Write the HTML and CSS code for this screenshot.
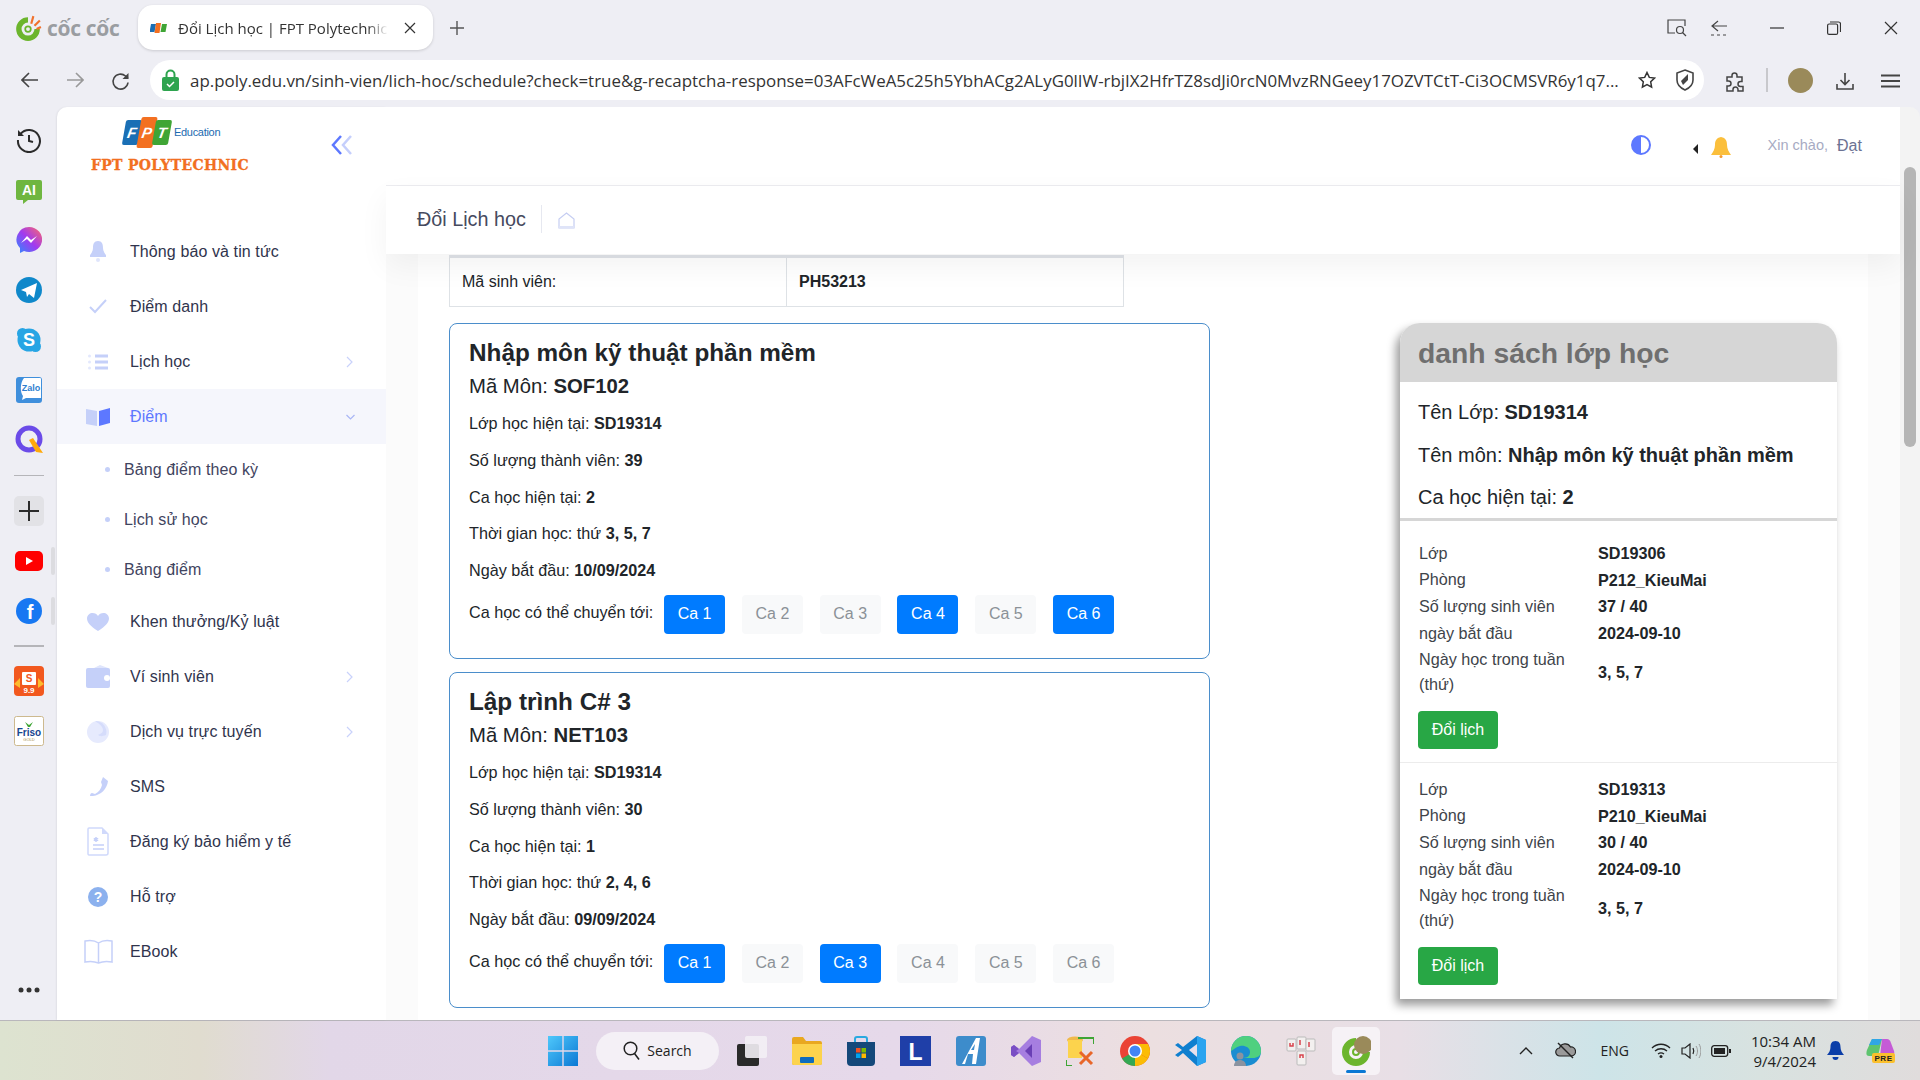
FILE: index.html
```html
<!DOCTYPE html>
<html lang="vi">
<head>
  <meta charset="UTF-8">
  <title>Đổi Lịch học | FPT Polytechnic</title>
  <link rel="stylesheet" href="styles.css">
</head>
<body>
  <!-- browser tab strip -->
  <div class="tabstrip">
    <div class="brand">
      <svg width="28" height="28" viewBox="0 0 26 26"><path d="M13 3a11 11 0 1 0 11 11h-5a6 6 0 1 1-6-6z" fill="#6cb52d"/><circle cx="13" cy="14" r="2.6" fill="none" stroke="#6cb52d" stroke-width="1.6"/><path d="M16 9l2-7M19 11l5-5M21 14l4-2" stroke="#f0712c" stroke-width="2"/></svg>
      <span class="brand-name">cốc cốc</span>
    </div>
    <div class="tab">
      <svg class="favicon" width="17" height="10" viewBox="0 0 17 10"><path d="M1 1h5l-1.5 8h-5z" fill="#1a6fb5"/><path d="M6 0h5l-1.500 10h-5z" fill="#f37021"/><path d="M12 1h5l-1.5 8h-5z" fill="#3fa535"/></svg>
      <span class="tab-title">Đổi Lịch học | FPT Polytechnic</span>
      <svg width="12" height="12" viewBox="0 0 12 12"><path d="M1 1l10 10M11 1L1 11" stroke="#333" stroke-width="1.2"/></svg>
    </div>
    <svg class="newtab" width="16" height="16" viewBox="0 0 16 16"><path d="M8 1v14M1 8h14" stroke="#555" stroke-width="1.4"/></svg>
    <div class="win-controls">
      <svg width="20" height="18" viewBox="0 0 20 18"><path d="M8 14H1V1h17v6" fill="none" stroke="#444" stroke-width="1.2"/><circle cx="13" cy="11" r="3.5" fill="none" stroke="#444" stroke-width="1.2"/><path d="M15.5 13.5l3.5 3.5" stroke="#444" stroke-width="1.2"/></svg>
      <svg class="wc-back" width="18" height="18" viewBox="0 0 18 18"><path d="M8 2L2 7l6 5M2 7h15M1 16h3M7 16h3M13 16h3" fill="none" stroke="#444" stroke-width="1.2"/></svg>
      <svg class="wc-min" width="14" height="2" viewBox="0 0 14 2"><path d="M0 1h14" stroke="#333" stroke-width="1.2"/></svg>
      <svg class="wc-max" width="14" height="14" viewBox="0 0 14 14"><rect x=".6" y="3" width="10" height="10.4" rx="1.5" fill="none" stroke="#333" stroke-width="1.2"/><path d="M3 1h8.5a2 2 0 0 1 2 2v8" fill="none" stroke="#333" stroke-width="1.2"/></svg>
      <svg class="wc-close" width="14" height="14" viewBox="0 0 14 14"><path d="M1 1l12 12M13 1L1 13" stroke="#333" stroke-width="1.2"/></svg>
    </div>
  </div>

  <!-- address bar -->
  <div class="toolbar">
    <svg class="nav-first" width="18" height="16" viewBox="0 0 18 16"><path d="M8 1L1 8l7 7M1 8h16" fill="none" stroke="#444" stroke-width="1.6"/></svg>
    <svg class="nav" width="18" height="16" viewBox="0 0 18 16"><path d="M10 1l7 7-7 7M17 8H1" fill="none" stroke="#999" stroke-width="1.6"/></svg>
    <svg class="nav" width="20" height="20" viewBox="0 0 20 20"><path d="M17 10.5A7.5 7.5 0 1 1 14.5 4L17 6.5" fill="none" stroke="#444" stroke-width="1.6"/><path d="M17.500 1v6h-6z" fill="#444"/></svg>
    <div class="omnibox">
      <svg width="17" height="22" viewBox="0 0 17 22"><path d="M4.500 9V5.500a4 4 0 0 1 8 0V9" fill="none" stroke="#2ea44f" stroke-width="2"/><rect y="8" width="17" height="14" rx="2" fill="#2ea44f"/><path d="M5 15l2.500 2.500L12 13" fill="none" stroke="#fff" stroke-width="1.5"/></svg>
      <span class="url">ap.poly.edu.vn/sinh-vien/lich-hoc/schedule?check=true&amp;g-recaptcha-response=03AFcWeA5c25h5YbhACg2ALyG0lIW-rbjIX2HfrTZ8sdJi0rcN0MvzRNGeey17OZVTCtT-Ci3OCMSVR6y1q7...</span>
      <svg class="star" width="18" height="18" viewBox="0 0 18 18"><path d="M9 1.500l2.300 4.900 5.200.7-3.800 3.700.9 5.300L9 13.500l-4.600 2.600.9-5.300L1.500 7.100l5.200-.7z" fill="none" stroke="#333" stroke-width="1.5"/></svg>
      <svg class="shield" width="18" height="22" viewBox="0 0 18 22"><path d="M9 1l8 3v7c0 5-3.500 8-8 10-4.500-2-8-5-8-10V4z" fill="none" stroke="#444" stroke-width="1.6"/><path d="M5 12l7-7v6l-5 5z" fill="#444"/></svg>
    </div>
    <svg class="ext" width="20" height="20" viewBox="0 0 20 20"><path d="M7 3.500a2.500 2.500 0 0 1 5 0V5h5v4.500h-1.500a2.500 2.500 0 0 0 0 5H18V19h-5v-1.500a2.500 2.500 0 0 0-5 0V19H2v-5h1.500a2.500 2.500 0 0 0 0-5H2V5h5z" fill="none" stroke="#444" stroke-width="1.5"/></svg>
    <span class="tool-sep"></span>
    <span class="avatar"></span>
    <svg class="dl" width="18" height="18" viewBox="0 0 18 18"><path d="M9 1v11M4.500 8L9 12.500 13.500 8M1 12v5h16v-5" fill="none" stroke="#444" stroke-width="1.6"/></svg>
    <svg class="menu" width="19" height="14" viewBox="0 0 19 14"><path d="M0 1.500h19M0 7h19M0 12.500h19" stroke="#444" stroke-width="1.8"/></svg>
  </div>

  <div class="window">
    <!-- browser side dock -->
    <aside class="dock">
      <div class="dock-item"><svg width="26" height="26" viewBox="0 0 26 26"><path d="M4.500 7A11 11 0 1 1 2 13" fill="none" stroke="#2b2b2b" stroke-width="2"/><path d="M2 3v6h6z" fill="#2b2b2b"/><path d="M13 8v6l4 1" fill="none" stroke="#2b2b2b" stroke-width="2"/></svg></div>
      <div class="dock-item dock-ai"><svg width="28" height="26" viewBox="0 0 28 26"><path d="M3 1h22a2 2 0 0 1 2 2v16a2 2 0 0 1-2 2H13l-5 4v-4H3a2 2 0 0 1-2-2V3a2 2 0 0 1 2-2z" fill="#6fb640"/><text x="14" y="16" class="svg-ai">AI</text></svg></div>
      <div class="dock-item"><svg width="26" height="26" viewBox="0 0 26 26"><defs><linearGradient id="ms" x1="0" y1="1" x2="1" y2="0"><stop offset="0" stop-color="#2b8cff"/><stop offset=".5" stop-color="#a13af0"/><stop offset="1" stop-color="#ff6a68"/></linearGradient></defs><path d="M13 0a13 12.500 0 1 1-5 24l-4 2v-5A13 12.500 0 0 1 13 0z" fill="url(#ms)"/><path d="M5 16l6-7 4 4 6-4-6 7-4-4z" fill="#fff"/></svg></div>
      <div class="dock-item"><svg width="26" height="26" viewBox="0 0 26 26"><circle cx="13" cy="13" r="13" fill="#0f88ca"/><path d="M5 13L21 6l-3 15-5-4-2 3-1-5z" fill="#fff"/></svg></div>
      <div class="dock-item"><svg width="26" height="26" viewBox="0 0 26 26"><circle cx="13" cy="13" r="11.500" fill="#27a5e4"/><circle cx="6.500" cy="6.500" r="5.500" fill="#27a5e4"/><circle cx="19.500" cy="19.500" r="5.500" fill="#27a5e4"/><text x="13" y="19" class="svg-s">S</text></svg></div>
      <div class="dock-item"><svg width="26" height="26" viewBox="0 0 26 26"><rect width="26" height="26" rx="3" fill="#3f8fdc"/><path d="M8 1h16a1 1 0 0 1 1 1v19H10l-4 2 1-4C4 15 4 6 8 1z" fill="#fff"/><text x="15" y="14" class="svg-zalo">Zalo</text></svg></div>
      <div class="dock-item"><svg width="30" height="30" viewBox="0 0 30 30"><circle cx="15" cy="14" r="11" fill="none" stroke="#6b4be8" stroke-width="5"/><path d="M15 15l4-2 10 15-7-1z" fill="#ffa90a"/></svg></div>
      <div class="dock-line"></div>
      <div class="dock-add"><svg width="20" height="20" viewBox="0 0 20 20"><path d="M10 0v20M0 10h20" stroke="#2b2b2b" stroke-width="2"/></svg></div>
      <div class="dock-item dock-open"><svg width="28" height="20" viewBox="0 0 28 20"><rect width="28" height="20" rx="5" fill="#f00"/><path d="M11 6l7 4-7 4z" fill="#fff"/></svg></div>
      <div class="dock-item dock-open"><svg width="26" height="26" viewBox="0 0 26 26"><circle cx="13" cy="13" r="13" fill="#1778f2"/><text x="14" y="21" class="svg-f">f</text></svg></div>
      <div class="dock-line dock-line-b"></div>
      <div class="dock-item"><svg width="30" height="30" viewBox="0 0 30 30"><rect width="30" height="30" rx="4" fill="#f2581e"/><path d="M0 18l6-6v10zM30 18l-6-6v10z" fill="#fdbb2d"/><rect x="8" y="6" width="14" height="13" rx="1" fill="#fff"/><text x="15" y="16" class="svg-sp">S</text><text x="15" y="27" class="svg-99">9.9</text></svg></div>
      <div class="dock-item"><svg width="30" height="30" viewBox="0 0 30 30"><rect x=".5" y=".5" width="29" height="29" rx="2" fill="#fff" stroke="#cdb98e"/><path d="M11 6l4 3 4-3-3 5h-2z" fill="#3fa535"/><text x="15" y="20" class="svg-friso">Friso</text><text x="15" y="25" class="svg-gold">GOLD</text></svg></div>
      <svg class="dock-more" width="22" height="6" viewBox="0 0 22 6"><circle cx="3" cy="3" r="2.500" fill="#333"/><circle cx="11" cy="3" r="2.500" fill="#333"/><circle cx="19" cy="3" r="2.500" fill="#333"/></svg>
    </aside>

    <!-- site sidebar -->
    <nav class="sidebar">
      <div class="logo">
        <div class="logo-main">
          <div class="logo-mark">
            <span class="fpt fpt-f">F</span><span class="fpt fpt-p">P</span><span class="fpt fpt-t">T</span>
            <span class="logo-edu">Education</span>
          </div>
          <div class="logo-name">FPT POLYTECHNIC</div>
        </div>
        <svg class="collapse" width="22" height="20" viewBox="0 0 22 20"><path d="M10 1L2 10l8 9" fill="none" stroke="#5d78ff" stroke-width="2.5"/><path d="M20 1l-8 9 8 9" fill="none" stroke="#c5cffc" stroke-width="2.5"/></svg>
      </div>
      <ul class="menu-list">
        <li class="menu-item"><span class="menu-icon"><svg width="16" height="21" viewBox="0 0 16 21"><path d="M8 0c4 0 5 3 5 7 0 3 2 6 3 7v2H0v-2c1-1 3-4 3-7 0-4 1-7 5-7z" fill="#c5d0f9"/><circle cx="8" cy="19" r="2" fill="#dfe5fc"/></svg></span>Thông báo và tin tức</li>
        <li class="menu-item"><span class="menu-icon"><svg width="18" height="15" viewBox="0 0 18 15"><path d="M1 8l5 5L17 1" fill="none" stroke="#c5d0f9" stroke-width="2"/></svg></span>Điểm danh</li>
        <li class="menu-item"><span class="menu-icon"><svg width="20" height="16" viewBox="0 0 20 16"><circle cx="1.500" cy="2" r="1.500" fill="#e3e8fd"/><circle cx="1.500" cy="8" r="1.500" fill="#e3e8fd"/><circle cx="1.500" cy="14" r="1.500" fill="#e3e8fd"/><path d="M7 2h13M7 8h13M7 14h13" stroke="#c5d0f9" stroke-width="3"/></svg></span>Lịch học<svg class="chev" width="7" height="12" viewBox="0 0 7 12"><path d="M1 1l5 5-5 5" fill="none" stroke="#c9d2fb" stroke-width="1.2"/></svg></li>
        <li class="menu-item is-open"><span class="menu-icon"><svg width="25" height="18" viewBox="0 0 25 18"><path d="M0 1l11 2v15L0 16z" fill="#c5d0f9"/><path d="M13 3l11-3v15l-11 3z" fill="#5d78ff"/></svg></span>Điểm<svg class="chev chev-down" width="9" height="6" viewBox="0 0 9 6"><path d="M.5 1l4 4 4-4" fill="none" stroke="#a9b6f5" stroke-width="1.2"/></svg></li>
        <li class="sub-item">Bảng điểm theo kỳ</li>
        <li class="sub-item">Lịch sử học</li>
        <li class="sub-item">Bảng điểm</li>
        <li class="menu-item"><span class="menu-icon"><svg width="22" height="18" viewBox="0 0 22 18"><path d="M11 18C3 13 0 9 0 5.500 0 2 3 0 5.500 0 8 0 10 1 11 3c1-2 3-3 5.500-3C19 0 22 2 22 5.500 22 9 19 13 11 18z" fill="#c5d0f9"/></svg></span>Khen thưởng/Kỷ luật</li>
        <li class="menu-item"><span class="menu-icon"><svg width="24" height="23" viewBox="0 0 24 23"><path d="M14 0l8 3H8z" fill="#dfe5fc"/><rect y="3" width="24" height="20" rx="2" fill="#c5d0f9"/><circle cx="21" cy="13" r="3" fill="#fff"/></svg></span>Ví sinh viên<svg class="chev" width="7" height="12" viewBox="0 0 7 12"><path d="M1 1l5 5-5 5" fill="none" stroke="#c9d2fb" stroke-width="1.2"/></svg></li>
        <li class="menu-item"><span class="menu-icon"><svg width="22" height="22" viewBox="0 0 22 22"><circle cx="11" cy="11" r="11" fill="#e6eafd"/><path d="M8 0c5 3 8 6 8 9s-3 4-5 5c3 2 5 1 8 0a11 11 0 0 0-11-14z" fill="#d5dcfb"/></svg></span>Dịch vụ trực tuyến<svg class="chev" width="7" height="12" viewBox="0 0 7 12"><path d="M1 1l5 5-5 5" fill="none" stroke="#c9d2fb" stroke-width="1.2"/></svg></li>
        <li class="menu-item"><span class="menu-icon"><svg width="19" height="19" viewBox="0 0 19 19"><path d="M14 0l5 4c-1 8-7 14-15 15H1c0-2 1-3 2-3l3 1c4-2 6-5 7-9l-1-3z" fill="#c5d0f9"/></svg></span>SMS</li>
        <li class="menu-item"><span class="menu-icon"><svg width="22" height="29" viewBox="0 0 22 29"><path d="M2 1h13l6 6v19a2 2 0 0 1-2 2H2a1.500 1.500 0 0 1-1-1V2a1 1 0 0 1 1-1z" fill="#fff" stroke="#d0d9fb" stroke-width="1.5"/><path d="M15 1v6h6z" fill="#d0d9fb"/><path d="M6 18h11M6 22h11" stroke="#c5d0f9" stroke-width="1.5"/><path d="M9 10v5M6.800 11.300l4.400 2.400M11.200 11.300l-4.400 2.400" stroke="#c5d0f9" stroke-width="1.5"/></svg></span>Đăng ký bảo hiểm y tế</li>
        <li class="menu-item"><span class="menu-icon"><svg width="20" height="20" viewBox="0 0 20 20"><circle cx="10" cy="10" r="10" fill="#8cb1ee"/><text x="10" y="15" class="svg-help">?</text></svg></span>Hỗ trợ</li>
        <li class="menu-item"><span class="menu-icon"><svg width="29" height="25" viewBox="0 0 29 25"><path d="M14.500 4C11 1.500 6 1 1 2v21c5-1 10-.5 13.500 1 3.500-1.500 8.500-2 13.500-1V2c-5-1-10-.5-13.500 2zm0 0v20" fill="none" stroke="#c5d0f9" stroke-width="1.5"/></svg></span>EBook</li>
      </ul>
    </nav>

    <div class="page">
      <header class="topbar">
        <span class="contrast"></span>
        <svg class="caret" width="5" height="10" viewBox="0 0 5 10"><path d="M5 0L0 5l5 5z" fill="#222"/></svg>
        <svg class="bell" width="20" height="21" viewBox="0 0 20 21"><path d="M10 0c5 1 6 4 6 8 0 4 2 7 4 10H0c2-3 4-6 4-10 0-4 1-7 6-8z" fill="#fbbf3c"/><circle cx="10" cy="19.500" r="1.500" fill="#f59a2e"/></svg>
        <span class="hello">Xin chào,</span>
        <span class="username">Đạt</span>
      </header>
      <div class="crumbs">
        <h3 class="crumb-title">Đổi Lịch học</h3>
        <svg class="crumb-home" width="17" height="17" viewBox="0 0 17 17"><path d="M1 16V7l7.500-6L16 7v9z" fill="none" stroke="#c5cdf2" stroke-width="1.2"/><path d="M1 14h15v2H1z" fill="#dfe4f8"/></svg>
      </div>

      <main class="content">
        <div class="col-left">
          <table class="info-table">
            <tr><td>Mã sinh viên:</td><td><b>PH53213</b></td></tr>
          </table>

          <section class="course">
            <h4>Nhập môn kỹ thuật phần mềm</h4>
            <h5>Mã Môn: <b>SOF102</b></h5>
            <p>Lớp học hiện tại: <b>SD19314</b></p>
            <p>Số lượng thành viên: <b>39</b></p>
            <p>Ca học hiện tại: <b>2</b></p>
            <p>Thời gian học: thứ <b>3, 5, 7</b></p>
            <p>Ngày bắt đầu: <b>10/09/2024</b></p>
            <div class="shift-row">
              <span>Ca học có thể chuyển tới:</span>
              <button class="btn on">Ca 1</button>
              <button class="btn">Ca 2</button>
              <button class="btn">Ca 3</button>
              <button class="btn on">Ca 4</button>
              <button class="btn">Ca 5</button>
              <button class="btn on">Ca 6</button>
            </div>
          </section>

          <section class="course">
            <h4>Lập trình C# 3</h4>
            <h5>Mã Môn: <b>NET103</b></h5>
            <p>Lớp học hiện tại: <b>SD19314</b></p>
            <p>Số lượng thành viên: <b>30</b></p>
            <p>Ca học hiện tại: <b>1</b></p>
            <p>Thời gian học: thứ <b>2, 4, 6</b></p>
            <p>Ngày bắt đầu: <b>09/09/2024</b></p>
            <div class="shift-row">
              <span>Ca học có thể chuyển tới:</span>
              <button class="btn on">Ca 1</button>
              <button class="btn">Ca 2</button>
              <button class="btn on">Ca 3</button>
              <button class="btn">Ca 4</button>
              <button class="btn">Ca 5</button>
              <button class="btn">Ca 6</button>
            </div>
          </section>
        </div>

        <aside class="class-panel">
          <h3 class="panel-head">danh sách lớp học</h3>
          <div class="panel-info">
            <p>Tên Lớp: <b>SD19314</b></p>
            <p>Tên môn: <b>Nhập môn kỹ thuật phần mềm</b></p>
            <p>Ca học hiện tại: <b>2</b></p>
          </div>
          <div class="class-block">
            <table class="class-table">
              <tr><td>Lớp</td><td>SD19306</td></tr>
              <tr><td>Phòng</td><td>P212_KieuMai</td></tr>
              <tr><td>Số lượng sinh viên</td><td>37 / 40</td></tr>
              <tr><td>ngày bắt đầu</td><td>2024-09-10</td></tr>
              <tr><td>Ngày học trong tuần (thứ)</td><td>3, 5, 7</td></tr>
            </table>
            <button class="btn-swap">Đổi lịch</button>
          </div>
          <div class="class-block">
            <table class="class-table">
              <tr><td>Lớp</td><td>SD19313</td></tr>
              <tr><td>Phòng</td><td>P210_KieuMai</td></tr>
              <tr><td>Số lượng sinh viên</td><td>30 / 40</td></tr>
              <tr><td>ngày bắt đầu</td><td>2024-09-10</td></tr>
              <tr><td>Ngày học trong tuần (thứ)</td><td>3, 5, 7</td></tr>
            </table>
            <button class="btn-swap">Đổi lịch</button>
          </div>
        </aside>
      </main>
    </div>

    <div class="scrollbar"><span class="thumb"></span></div>
  </div>

  <!-- windows taskbar -->
  <footer class="taskbar">
    <svg class="start" width="30" height="30" viewBox="0 0 30 30"><defs><linearGradient id="wn" x1="0" y1="0" x2="1" y2="1"><stop offset="0" stop-color="#4fc8fb"/><stop offset="1" stop-color="#0a78d4"/></linearGradient></defs><path d="M0 0h14.300v14.300H0zM15.700 0H30v14.300H15.700zM0 15.700h14.300V30H0zM15.700 15.700H30V30H15.700z" fill="url(#wn)"/></svg>
    <div class="search-pill">
      <svg width="17" height="19" viewBox="0 0 17 19"><circle cx="7.500" cy="7.500" r="6.300" fill="none" stroke="#222" stroke-width="1.5"/><path d="M11.500 12.500l4.500 6" stroke="#222" stroke-width="1.5"/></svg>
      <span>Search</span>
    </div>
    <div class="apps">
      <svg width="30" height="30" viewBox="0 0 30 30"><rect y="8" width="22" height="22" rx="2" fill="#2a2a2a"/><rect x="8" width="22" height="22" rx="2" fill="#f3f0f5" opacity=".9"/></svg>
      <svg width="30" height="28" viewBox="0 0 30 28"><path d="M0 2a2 2 0 0 1 2-2h9l3 4h14a2 2 0 0 1 2 2v20a2 2 0 0 1-2 2H2a2 2 0 0 1-2-2z" fill="#e9a820"/><path d="M0 7h30v19a2 2 0 0 1-2 2H2a2 2 0 0 1-2-2z" fill="#fcd34d"/><rect x="8" y="20" width="14" height="6" rx="1" fill="#0f6cbd"/></svg>
      <svg width="28" height="30" viewBox="0 0 28 30"><path d="M8 7V3a2 2 0 0 1 2-2h8a2 2 0 0 1 2 2v4" fill="none" stroke="#2aa9e0" stroke-width="2"/><path d="M0 6h28v20a4 4 0 0 1-4 4H4a4 4 0 0 1-4-4z" fill="#14487a"/><rect x="9" y="12" width="4.500" height="4.500" fill="#f25022"/><rect x="14.500" y="12" width="4.500" height="4.500" fill="#7fba00"/><rect x="9" y="17.500" width="4.500" height="4.500" fill="#00a4ef"/><rect x="14.500" y="17.500" width="4.500" height="4.500" fill="#ffb900"/></svg>
      <svg width="31" height="30" viewBox="0 0 31 30"><rect width="31" height="30" fill="#1f3fa8"/><text x="15.500" y="24" class="svg-l">L</text></svg>
      <svg width="30" height="30" viewBox="0 0 30 30"><rect width="30" height="30" rx="3" fill="#3d8ccb"/><path d="M6 28L20 2h4l-4 26h-4l1-10h-5l-3 10z" fill="#fff"/><path d="M15 14h3l1-6z" fill="#3d8ccb"/></svg>
      <svg width="30" height="30" viewBox="0 0 30 30"><path d="M21 0l9 4v22l-9 4L8 17l-5 4-3-2V11l3-2 5 4z" fill="#a67ee0"/><path d="M21 8l-7 7 7 7z" fill="#6a3fb5"/><path d="M0 11l3-2 5 4-3 2 3 2-5 4-3-2z" fill="#7a4fc4"/></svg>
      <svg width="28" height="30" viewBox="0 0 28 30"><ellipse cx="9" cy="4" rx="8" ry="3.500" fill="#f0b94a"/><path d="M2 4h14v18H2z" fill="#fcd34d"/><path d="M12 2h16M28 2v6M0 24v6h6" fill="none" stroke="#3fa535" stroke-width="2"/><path d="M14 16l12 12M26 16L14 28" stroke="#e8662a" stroke-width="3"/></svg>
      <svg class="app-chrome" width="30" height="30" viewBox="0 0 30 30"><circle cx="15" cy="15" r="15" fill="#ea4335"/><path d="M15 15L2 22.500A15 15 0 0 0 15 30z" fill="#34a853"/><path d="M15 15l13 7.500A15 15 0 0 1 15 30z" fill="#fbbc05"/><path d="M15 8h13a15 15 0 0 1 0 14.500L15 15z" fill="#fbbc05"/><circle cx="15" cy="15" r="7" fill="#fff"/><circle cx="15" cy="15" r="5.500" fill="#4285f4"/></svg>
      <svg width="31" height="30" viewBox="0 0 31 30"><path d="M22 0l9 4v22l-9 4L8 17l-5 4-3-2 7-5-7-5 3-2 5 4z" fill="#0f7fcf"/><path d="M22 0l9 4v22l-9 4z" fill="#2aa4f0"/><path d="M22 8l-8 6 8 7z" fill="#e6e0ec"/></svg>
      <svg width="30" height="30" viewBox="0 0 30 30"><circle cx="15" cy="15" r="15" fill="#1a8dd1"/><path d="M15 0a15 15 0 0 1 15 15c0 5-4 7-8 7H12c5 0 7-3 7-6 0-5-6-7-10-6-4 1-7 4-9 5A15 15 0 0 1 15 0z" fill="#4fd07f"/><circle cx="9" cy="20" r="3.500" fill="#8a93a0"/><path d="M3 30c0-4 3-6 6-6s6 2 6 6z" fill="#8a93a0"/></svg>
      <svg width="30" height="30" viewBox="0 0 30 30"><rect x="1" y="3" width="9" height="12" rx="1" fill="#f3f0ef" stroke="#bbb"/><rect x="11" y="1" width="9" height="12" rx="1" fill="#f3f0ef" stroke="#bbb"/><rect x="20" y="3" width="9" height="12" rx="1" fill="#f3f0ef" stroke="#bbb"/><rect x="11" y="15" width="9" height="14" rx="1" fill="#f3f0ef" stroke="#bbb"/><path d="M4 7v3h3V7M14 4v5M23 6v5M14 22v-3h3v3" fill="none" stroke="#d8434e" stroke-width="1.5"/></svg>
      <div class="app-active">
        <svg width="30" height="30" viewBox="0 0 30 30"><path d="M15 2a14 14 0 1 0 14 14h-7a7 7 0 1 1-7-7z" fill="#6cb52d"/><circle cx="15" cy="16" r="3" fill="none" stroke="#6cb52d" stroke-width="2"/><circle cx="22" cy="9" r="9" fill="#9a8a5a"/></svg>
        <span class="app-dot"></span>
      </div>
    </div>
    <div class="tray">
      <svg class="tr-up" width="14" height="8" viewBox="0 0 14 8"><path d="M1 7l6-6 6 6" fill="none" stroke="#222" stroke-width="1.4"/></svg>
      <svg class="tr-cloud" width="21" height="17" viewBox="0 0 21 17"><path d="M5 14a4 4 0 0 1-.500-8 6 6 0 0 1 11-1 4.500 4.500 0 0 1 1 9z" fill="#9a9a9a" stroke="#222" stroke-width="1.2"/><path d="M3 1l15 15" stroke="#222" stroke-width="1.4"/></svg>
      <span class="tr-lang">ENG</span>
      <svg class="tr-wifi" width="20" height="15" viewBox="0 0 20 15"><path d="M1 5c5-5 13-5 18 0M4 8c3.500-3 8.500-3 12 0M7 11c2-1.500 4-1.500 6 0" fill="none" stroke="#222" stroke-width="1.3"/><circle cx="10" cy="13.500" r="1.500" fill="#222"/></svg>
      <svg class="tr-vol" width="20" height="16" viewBox="0 0 20 16"><path d="M1 5h3l5-4v14l-5-4H1z" fill="none" stroke="#222" stroke-width="1.2"/><path d="M12 5c1 2 1 4 0 6" fill="none" stroke="#222" stroke-width="1.2"/><path d="M15 3c2 3 2 7 0 10M18 1c2.500 4 2.500 10 0 14" fill="none" stroke="#999" stroke-width="1"/></svg>
      <svg class="tr-bat" width="20" height="12" viewBox="0 0 20 12"><rect x=".7" y=".7" width="16" height="10.600" rx="2.500" fill="none" stroke="#222" stroke-width="1.3"/><rect x="3" y="3" width="11" height="6" fill="#222"/><rect x="18" y="4" width="2" height="4" fill="#222"/></svg>
      <div class="clock"><span>10:34 AM</span><span>9/4/2024</span></div>
      <svg class="tr-bell" width="17" height="19" viewBox="0 0 17 19"><path d="M8.500 0c4 0 5 3 5 6 0 3 1.500 6 3.500 8H0c2-2 3.500-5 3.500-8 0-3 1-6 5-6z" fill="#0b3ea8"/><path d="M5.500 16h6a3 3 0 0 1-6 0z" fill="#0b3ea8"/></svg>
      <svg class="tr-copilot" width="29" height="25" viewBox="0 0 29 25"><path d="M6 1h10L12 18H3C0 18 0 15 1 12z" fill="#5ec46f"/><path d="M16 1h5c2 0 3 1 4 4l3 8c1 3-1 5-3 5H14z" fill="#c55bd6"/><path d="M6 1h10l-3 6H3z" fill="#2fa6e6"/><rect x="6" y="15" width="23" height="10" rx="2" fill="#fbc02d"/><text x="17.500" y="23" class="svg-pre">PRE</text></svg>
    </div>
  </footer>
</body>
</html>
```

FILE: styles.css
```css
* {
  box-sizing: border-box;
}

html, body {
  margin: 0;
  height: 1080px;
  overflow: hidden;
}

body {
  display: flex;
  flex-direction: column;
  background: #eeeef4;
  font-family: "Liberation Sans", Arial, sans-serif;
  font-size: 16px;
  color: #212529;
}

/* browser chrome */
.tabstrip {
  height: 60px;
  display: flex;
  align-items: flex-start;
  flex: none;
}

.brand {
  width: 138px;
  height: 50px;
  display: flex;
  align-items: center;
  padding: 5px 0 0 14px;
  gap: 5px;
}

.brand-name {
  font-size: 21px;
  font-weight: bold;
  color: #9a9da1;
  font-family: "Open Sans", sans-serif;
  letter-spacing: -0.3px;
}

.tab {
  margin-top: 5px;
  width: 295px;
  height: 45px;
  background: #fff;
  border-radius: 15px;
  box-shadow: 0 1px 3px rgba(0, 0, 0, 0.15);
  display: flex;
  align-items: center;
  padding: 0 16px 0 12px;
}

.favicon {
  flex: none;
}

.tab-title {
  margin-left: 11px;
  width: 210px;
  white-space: nowrap;
  overflow: hidden;
  font-family: "Open Sans", sans-serif;
  font-size: 15px;
  color: #333;
  flex: none;
  margin-right: 16px;
  -webkit-mask-image: linear-gradient(to right, #000 90%, transparent);
  mask-image: linear-gradient(to right, #000 90%, transparent);
}

.newtab {
  margin: 20px 0 0 16px;
}

.win-controls {
  margin-left: auto;
  display: flex;
  align-items: center;
  height: 55px;
  padding-right: 22px;
}

.wc-back {
  margin-left: 23px;
}

.wc-min {
  margin-left: 42px;
}

.wc-max {
  margin-left: 43px;
}

.wc-close {
  margin-left: 43px;
}

.toolbar {
  height: 47px;
  display: flex;
  align-items: flex-start;
  flex: none;
  padding-left: 21px;
}

.toolbar > svg {
  margin-top: 12px;
}

.nav {
  margin-left: 27px;
}

.omnibox {
  margin-left: 19px;
  width: 1554px;
  height: 40px;
  background: #fff;
  border-radius: 20px;
  display: flex;
  align-items: center;
  padding-left: 12px;
}

.url {
  margin-left: 11px;
  font-family: "Open Sans", sans-serif;
  font-size: 16.9px;
  color: #333;
  white-space: nowrap;
  width: 1430px;
  flex: none;
  overflow: hidden;
}

.star {
  margin-left: 18px;
  flex: none;
}

.shield {
  margin-left: 20px;
  flex: none;
}

.ext {
  margin-left: 21px;
}

.tool-sep {
  width: 2px;
  height: 24px;
  background: #c8c8cc;
  margin: 8px 0 0 21px;
}

.avatar {
  width: 25px;
  height: 25px;
  border-radius: 50%;
  background: #9a8a5a;
  margin: 8px 0 0 20px;
}

.dl {
  margin-left: 23px;
}

.toolbar > .menu {
  margin-left: 27px;
  margin-top: 14px;
}

.window {
  height: 913px;
  display: flex;
  flex: none;
}

/* side dock */
.dock {
  width: 57px;
  flex: none;
  display: flex;
  flex-direction: column;
  align-items: center;
  padding-top: 8px;
}

.dock-item {
  height: 50px;
  width: 100%;
  display: flex;
  align-items: center;
  justify-content: center;
  flex: none;
}

.dock-ai {
  padding-top: 4px;
}

.svg-ai {
  font: bold 14px "Liberation Sans", sans-serif;
  fill: #fff;
  text-anchor: middle;
}

.svg-s {
  font: bold 18px "Liberation Sans", sans-serif;
  fill: #fff;
  text-anchor: middle;
}

.svg-zalo {
  font: bold 9px "Liberation Sans", sans-serif;
  fill: #2f7fd0;
  text-anchor: middle;
}

.svg-f {
  font: bold 20px "Liberation Sans", sans-serif;
  fill: #fff;
  text-anchor: middle;
}

.svg-sp {
  font: bold 10px "Liberation Sans", sans-serif;
  fill: #f2581e;
  text-anchor: middle;
}

.svg-99 {
  font: bold 8px "Liberation Sans", sans-serif;
  fill: #fff;
  text-anchor: middle;
}

.svg-friso {
  font: bold 10px "Liberation Sans", sans-serif;
  fill: #17458f;
  text-anchor: middle;
}

.svg-gold {
  font: 4px "Liberation Sans", sans-serif;
  fill: #a58a4a;
  text-anchor: middle;
}

.dock-line {
  width: 30px;
  height: 1px;
  background: #b5b5b9;
  margin: 10px 0 20px;
  flex: none;
}

.dock-line-b {
  height: 2px;
  margin: 9px 0 9px;
}

.dock-add {
  width: 30px;
  height: 30px;
  border-radius: 5px;
  background: #e2e2e6;
  display: flex;
  align-items: center;
  justify-content: center;
  flex: none;
  margin-bottom: 10px;
}

.dock-open {
  position: relative;
}

.dock-open::after {
  content: "";
  position: absolute;
  right: 2px;
  top: 11px;
  width: 4px;
  height: 28px;
  border-radius: 2px;
  background: #dcdce0;
}

.dock-more {
  margin-top: auto;
  margin-bottom: 27px;
}

/* site sidebar */
.sidebar {
  width: 329px;
  flex: none;
  background: #fff;
  border-top-left-radius: 10px;
  box-shadow: -1px 0 2px rgba(0, 0, 0, 0.06);
  position: relative;
  z-index: 2;
}

.logo {
  height: 98px;
  display: flex;
  padding: 10px 0 0 34px;
}

.logo-main {
  width: 159px;
}

.logo-mark {
  display: flex;
  align-items: center;
  height: 30px;
  padding-left: 33px;
}

.fpt {
  width: 16px;
  height: 25px;
  margin-right: -1px;
  color: #fff;
  font-weight: bold;
  font-style: italic;
  font-size: 15px;
  display: flex;
  align-items: center;
  justify-content: center;
  transform: skewX(-10deg);
  border-radius: 2px;
}

.fpt-f {
  background: #1a6fb5;
}

.fpt-p {
  background: #f37021;
  height: 31px;
}

.fpt-t {
  background: #3fa535;
}

.logo-edu {
  margin-left: 5px;
  font-size: 11px;
  color: #1c6ab0;
  letter-spacing: -0.3px;
}

.logo-name {
  margin-top: 10px;
  font-family: "DejaVu Serif", serif;
  font-weight: bold;
  font-size: 14px;
  color: #f26f21;
  white-space: nowrap;
  letter-spacing: 0.3px;
  -webkit-text-stroke: 0.3px #f26f21;
}

.collapse {
  margin: 18px 0 0 81px;
}

.menu-list {
  list-style: none;
  margin: 19px 0 0;
  padding: 0;
}

.menu-item {
  height: 55px;
  display: flex;
  align-items: center;
  padding-left: 73px;
  position: relative;
  color: #30344d;
  font-size: 16px;
  letter-spacing: 0.1px;
}

.menu-icon {
  position: absolute;
  left: 21px;
  width: 40px;
  display: flex;
  justify-content: center;
}

.chev {
  margin-left: auto;
  margin-right: 33px;
}

.chev-down {
  margin-right: 31px;
}

.is-open {
  background: #f5f6fc;
  color: #5d78ff;
}

.sub-item {
  height: 50px;
  display: flex;
  align-items: center;
  padding: 1px 0 0 67px;
  position: relative;
  color: #3f4460;
  font-size: 16px;
  letter-spacing: 0.1px;
}

.sub-item::before {
  content: "";
  position: absolute;
  left: 48px;
  width: 5px;
  height: 5px;
  border-radius: 50%;
  background: #c5d0f9;
}

/* main page */
.page {
  flex: 1;
  min-width: 0;
  display: flex;
  flex-direction: column;
  background: #fbfbfb;
}

.topbar {
  height: 79px;
  flex: none;
  background: #fff;
  border-bottom: 1px solid #ececf0;
  display: flex;
  align-items: center;
  padding: 0 37px 0 0;
  justify-content: flex-end;
  position: relative;
  z-index: 2;
}

.contrast {
  width: 20px;
  height: 20px;
  border-radius: 50%;
  border: 2px solid #5d78ff;
  background: linear-gradient(to right, #5d78ff 50%, #fff 50%);
  margin-right: 42px;
  margin-top: -3px;
}

.caret {
  margin-right: 13px;
  margin-top: 6px;
}

.bell {
  margin-right: 37px;
  margin-top: 2px;
}

.hello {
  font-size: 14.5px;
  color: #a7abc3;
  margin-right: 9px;
  margin-top: -2px;
}

.username {
  font-size: 16px;
  color: #6c7293;
  width: 26px;
  margin-top: -1px;
}

.crumbs {
  height: 68px;
  flex: none;
  background: #fff;
  display: flex;
  align-items: center;
  padding: 0 0 2px 31px;
  box-shadow: 0 12px 30px rgba(0, 0, 0, 0.05);
  position: relative;
  z-index: 2;
}

.crumb-title {
  margin: 0;
  font-weight: normal;
  font-size: 19.8px;
  color: #464a5e;
  padding-right: 15px;
  border-right: 1px solid #e6e8f0;
  line-height: 28px;
}

.crumb-home {
  margin-left: 16px;
  margin-top: 3px;
}

.content {
  flex: 1;
  min-height: 0;
  overflow: hidden;
  margin: 0 32px;
  background: #fff;
  display: flex;
  padding: 1px 0 0 31px;
}

.col-left {
  width: 761px;
  flex: none;
}

.info-table {
  width: 675px;
  border-collapse: collapse;
  border-top: 3px solid #dfe2e8;
  margin-bottom: 16px;
  table-layout: fixed;
}

.info-table td {
  height: 50px;
  border: 1px solid #dee2e6;
  border-top: 0;
  padding: 0 12px 1px;
  font-size: 16px;
}

.course {
  height: 336px;
  border: 1px solid #4b8ecb;
  border-radius: 8px;
  padding: 12px 19px 0;
  margin-bottom: 13px;
}

.course h4 {
  margin: 0;
  font-size: 24.3px;
  line-height: 33px;
  font-weight: bold;
}

.course h5 {
  margin: 0 0 8px;
  font-size: 20.3px;
  line-height: 34px;
  font-weight: normal;
}

.course p {
  margin: 0 0 12.8px;
  line-height: 24px;
  font-size: 16.2px;
}

.shift-row {
  display: flex;
  align-items: center;
  gap: 16.8px;
  font-size: 16.2px;
}

.shift-row span {
  margin-right: -6px;
  margin-top: -4px;
}

.btn {
  width: 61px;
  height: 39px;
  border: 0;
  border-radius: 4px;
  background: #f8f9fa;
  color: #8b9197;
  font-family: inherit;
  font-size: 16px;
  padding: 0;
}

.btn.on {
  background: #007bff;
  color: #fff;
}

.class-panel {
  margin: 68px 0 0 190px;
  width: 437px;
  height: 676px;
  flex: none;
  background: #fff;
  border-radius: 20px 20px 0 0;
  box-shadow: -4px 6px 10px rgba(0, 0, 0, 0.4);
}

.panel-head {
  margin: 0;
  height: 59px;
  background: #d6d6d6;
  border-radius: 20px 20px 0 0;
  color: #6f6f6f;
  font-size: 28.3px;
  line-height: 60px;
  padding-left: 18px;
}

.panel-info {
  padding: 9px 18px 0;
  height: 139px;
  border-bottom: 3px solid #d6d6d6;
}

.panel-info p {
  margin: 0;
  height: 42.5px;
  line-height: 42.5px;
  font-size: 20px;
}

.class-block {
  padding: 19px 18px 0;
  height: 242px;
  border-bottom: 1px solid #ececec;
}

.class-block + .class-block {
  padding-top: 13px;
  border-bottom: 0;
}

.class-table {
  border-collapse: collapse;
  width: 100%;
  table-layout: fixed;
}

.class-table td {
  padding: 0;
  line-height: 26.7px;
  font-size: 16.2px;
  color: #40444a;
  vertical-align: middle;
}

.class-table td:first-child {
  width: 180px;
  padding-right: 10px;
  padding-left: 1px;
  line-height: 25.5px;
}

.class-table td + td {
  font-weight: bold;
  color: #212529;
}

.btn-swap {
  margin-top: 13px;
  width: 80px;
  height: 38px;
  border: 0;
  border-radius: 4px;
  background: #28a745;
  color: #fff;
  font-family: inherit;
  font-size: 16px;
  padding: 0;
  display: block;
}

.scrollbar {
  width: 20px;
  flex: none;
  background: #f3f3f3;
  padding: 60px 4px 0;
  border-top-right-radius: 10px;
}

.thumb {
  display: block;
  height: 280px;
  border-radius: 6px;
  background: #b5b5b5;
}

/* taskbar */
.taskbar {
  height: 60px;
  flex: none;
  border-top: 1px solid #b9b7bc;
  background: linear-gradient(to right, #dde3d0 0, #e0dccf 200px, #e2d7e8 330px, #e6d9ea 900px, #ecdfe0 1150px, #e8dfe6 1400px, #cde4e8 1600px, #d8e2e0 1760px, #e0dcdc 1920px);
  display: flex;
  align-items: center;
  padding-left: 548px;
}

.start {
  flex: none;
}

.search-pill {
  margin-left: 18px;
  width: 123px;
  height: 38px;
  border-radius: 19px;
  background: #f4f0f6;
  display: flex;
  align-items: center;
  justify-content: center;
  gap: 7px;
  font-size: 14px;
  color: #222;
  font-family: "Open Sans", sans-serif;
}

.apps {
  margin-left: 18px;
  display: flex;
  align-items: center;
  gap: 25px;
}

.app-chrome {
  margin-left: 1px;
}

.app-active {
  width: 48px;
  height: 48px;
  margin-left: -9px;
  background: #f6f2f6;
  border-radius: 5px;
  display: flex;
  align-items: center;
  justify-content: center;
  position: relative;
}

.app-dot {
  position: absolute;
  left: 14px;
  bottom: 2px;
  width: 20px;
  height: 3px;
  border-radius: 2px;
  background: #0a78d4;
}

.tray {
  margin-left: auto;
  display: flex;
  align-items: center;
  padding-right: 25px;
  color: #222;
  font-family: "Open Sans", sans-serif;
}

.tr-lang {
  font-size: 14px;
  margin-left: 24px;
}

.tr-cloud {
  margin-left: 22px;
}

.tr-wifi {
  margin-left: 22px;
}

.tr-vol {
  margin-left: 10px;
}

.tr-bat {
  margin-left: 10px;
}

.clock {
  margin-left: 20px;
  display: flex;
  flex-direction: column;
  align-items: flex-end;
  font-size: 15px;
  line-height: 20px;
}

.tr-bell {
  margin-left: 11px;
}

.tr-copilot {
  margin-left: 22px;
}

.svg-l {
  font: bold 23px "Liberation Sans", sans-serif;
  fill: #fff;
  text-anchor: middle;
}

.svg-help {
  font: bold 14px "Liberation Sans", sans-serif;
  fill: #fff;
  text-anchor: middle;
}

.svg-pre {
  font: bold 8px "Liberation Sans", sans-serif;
  fill: #222;
  text-anchor: middle;
  letter-spacing: 0.5px;
}
```
